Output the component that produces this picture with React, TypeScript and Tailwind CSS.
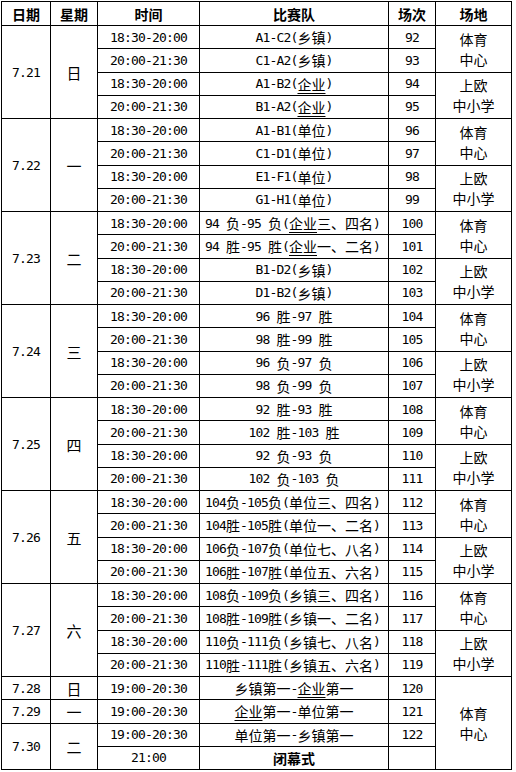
import React from "react";

const ASCII = "font-['DejaVu_Sans_Mono',monospace] text-[13px] tracking-[-0.83px]";
const CJK = "font-['Noto_Sans_CJK_SC',sans-serif] text-[14px]";

function Txt({ s, bold = false }: { s: string; bold?: boolean }) {
  const parts = s.split(/(\{[^}]*\})/).filter(Boolean);
  const out: React.ReactNode[] = [];
  parts.forEach((p, i) => {
    const u = p.startsWith("{");
    const t = u ? p.slice(1, -1) : p;
    const runs = t.match(/[\x00-\x7F]+|[^\x00-\x7F]+/g) || [];
    runs.forEach((r, j) => {
      const isAscii = /^[\x00-\x7F]/.test(r);
      out.push(
        <span
          key={i + "-" + j}
          className={
            (isAscii ? ASCII : CJK) +
            (u ? " underline underline-offset-[3px] decoration-1" : "") +
            (bold ? " font-bold" : "")
          }
        >
          {r}
        </span>
      );
    });
  });
  return <>{out}</>;
}

function Cell({
  children,
  span = "",
  left = false,
}: {
  children?: React.ReactNode;
  span?: string;
  left?: boolean;
}) {
  return (
    <div
      className={
        "bg-white flex items-center whitespace-pre text-black leading-none " +
        (left ? "justify-start pl-[5px] " : "justify-center ") +
        span
      }
    >
      {children}
    </div>
  );
}

type Day = { d: string; w: string; teams: string[]; start: number; left: number[] };

const days: Day[] = [
  { d: "7.21", w: "日", teams: ["A1-C2(乡镇)", "C1-A2(乡镇)", "A1-B2({企业})", "B1-A2({企业})"], start: 92, left: [] },
  { d: "7.22", w: "一", teams: ["A1-B1(单位)", "C1-D1(单位)", "E1-F1(单位)", "G1-H1(单位)"], start: 96, left: [] },
  {
    d: "7.23",
    w: "二",
    teams: ["94 负-95 负({企业}三、四名)", "94 胜-95 胜({企业}一、二名)", "B1-D2(乡镇)", "D1-B2(乡镇)"],
    start: 100,
    left: [0, 1],
  },
  { d: "7.24", w: "三", teams: ["96 胜-97 胜", "98 胜-99 胜", "96 负-97 负", "98 负-99 负"], start: 104, left: [] },
  { d: "7.25", w: "四", teams: ["92 胜-93 胜", "102 胜-103 胜", "92 负-93 负", "102 负-103 负"], start: 108, left: [] },
  {
    d: "7.26",
    w: "五",
    teams: ["104负-105负(单位三、四名)", "104胜-105胜(单位一、二名)", "106负-107负(单位七、八名)", "106胜-107胜(单位五、六名)"],
    start: 112,
    left: [0, 1, 2, 3],
  },
  {
    d: "7.27",
    w: "六",
    teams: ["108负-109负(乡镇三、四名)", "108胜-109胜(乡镇一、二名)", "110负-111负(乡镇七、八名)", "110胜-111胜(乡镇五、六名)"],
    start: 116,
    left: [0, 1, 2, 3],
  },
];

const times = ["18:30-20:00", "20:00-21:30", "18:30-20:00", "20:00-21:30"];

function Venue({ a, b, span }: { a: string; b: string; span: string }) {
  return (
    <div className={"bg-white flex flex-col items-center justify-center text-black " + span}>
      <span className={CJK + " leading-[20px]"}>{a}</span>
      <span className={CJK + " leading-[20px]"}>{b}</span>
    </div>
  );
}

const WEEK = "font-['Noto_Sans_CJK_SC',sans-serif] text-[15px]";
const HEAD = "font-['Noto_Sans_CJK_SC',sans-serif] text-[14px] font-bold";

export default function App() {
  const cells: React.ReactNode[] = [];
  ["日期", "星期", "时间", "比赛队", "场次", "场地"].forEach((h) =>
    cells.push(
      <Cell key={"h" + h}>
        <span className={HEAD}>{h}</span>
      </Cell>
    )
  );
  days.forEach((day) => {
    day.teams.forEach((t, i) => {
      if (i === 0) {
        cells.push(
          <Cell key={day.d + "d"} span="row-span-4">
            <Txt s={day.d} />
          </Cell>
        );
        cells.push(
          <Cell key={day.d + "w"} span="row-span-4">
            <span className={WEEK}>{day.w}</span>
          </Cell>
        );
      }
      cells.push(
        <Cell key={day.d + "t" + i}>
          <Txt s={times[i]} />
        </Cell>
      );
      cells.push(
        <Cell key={day.d + "m" + i} left={day.left.includes(i)}>
          <Txt s={t} />
        </Cell>
      );
      cells.push(
        <Cell key={day.d + "n" + i}>
          <Txt s={String(day.start + i)} />
        </Cell>
      );
      if (i === 0) cells.push(<Venue key={day.d + "v0"} a="体育" b="中心" span="row-span-2" />);
      if (i === 2) cells.push(<Venue key={day.d + "v2"} a="上欧" b="中小学" span="row-span-2" />);
    });
  });

  // 7.28
  cells.push(
    <Cell key="28d">
      <Txt s="7.28" />
    </Cell>
  );
  cells.push(
    <Cell key="28w">
      <span className={WEEK}>日</span>
    </Cell>
  );
  cells.push(
    <Cell key="28t">
      <Txt s="19:00-20:30" />
    </Cell>
  );
  cells.push(
    <Cell key="28m">
      <Txt s="乡镇第一-{企业}第一" />
    </Cell>
  );
  cells.push(
    <Cell key="28n">
      <Txt s="120" />
    </Cell>
  );
  cells.push(<Venue key="28v" a="体育" b="中心" span="row-span-4" />);
  // 7.29
  cells.push(
    <Cell key="29d">
      <Txt s="7.29" />
    </Cell>
  );
  cells.push(
    <Cell key="29w">
      <span className={WEEK}>一</span>
    </Cell>
  );
  cells.push(
    <Cell key="29t">
      <Txt s="19:00-20:30" />
    </Cell>
  );
  cells.push(
    <Cell key="29m">
      <Txt s="{企业}第一-单位第一" />
    </Cell>
  );
  cells.push(
    <Cell key="29n">
      <Txt s="121" />
    </Cell>
  );
  // 7.30
  cells.push(
    <Cell key="30d" span="row-span-2">
      <Txt s="7.30" />
    </Cell>
  );
  cells.push(
    <Cell key="30w" span="row-span-2">
      <span className={WEEK}>二</span>
    </Cell>
  );
  cells.push(
    <Cell key="30t">
      <Txt s="19:00-20:30" />
    </Cell>
  );
  cells.push(
    <Cell key="30m">
      <Txt s="单位第一-乡镇第一" />
    </Cell>
  );
  cells.push(
    <Cell key="30n">
      <Txt s="122" />
    </Cell>
  );
  cells.push(
    <Cell key="31t">
      <Txt s="21:00" />
    </Cell>
  );
  cells.push(
    <Cell key="31m">
      <span className={HEAD}>闭幕式</span>
    </Cell>
  );
  cells.push(<Cell key="31n" />);

  return (
    <div className="min-h-[772px] w-[516px] bg-white pl-[1px] pt-[1px]">
      <div className="grid w-max grid-cols-[48px_46px_101px_188px_46px_75px] grid-rows-[23px_repeat(32,22.25px)] gap-px border border-black bg-black">
        {cells}
      </div>
    </div>
  );
}
